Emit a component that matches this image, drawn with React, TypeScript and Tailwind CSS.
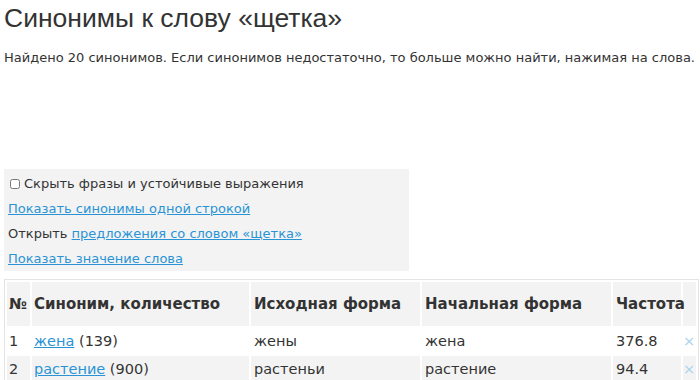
const rows = [
  { n: 1, word: "жена", count: 139, source: "жены", base: "жена", freq: "376.8" },
  { n: 2, word: "растение", count: 900, source: "растеньи", base: "растение", freq: "94.4" },
];

export default function App() {
  return (
    <div className="h-[380px] w-[700px] overflow-hidden bg-white px-1 text-[#333] font-['DejaVu_Sans',Verdana,sans-serif]">
      <h1 className="pt-[3px] text-[26.5px] leading-[30px] font-['Liberation_Sans',Arial,sans-serif] whitespace-nowrap">
        Синонимы к слову «щетка»
      </h1>
      <p className="mt-[15px] text-[13px] leading-[20px] whitespace-nowrap">
        Найдено 20 синонимов. Если синонимов недостаточно, то больше можно найти, нажимая на слова.
      </p>

      <div className="mt-[101px] w-[405px] bg-[#f3f3f3] px-1 pt-[2px] pb-0 text-[13px] leading-[25px]">
        <label className="flex items-center gap-[4px]">
          <input type="checkbox" className="ml-[2px] h-[10px] w-[10px]" />
          Скрыть фразы и устойчивые выражения
        </label>
        <div>
          <a href="#" className="text-[#2a93d5] underline">Показать синонимы одной строкой</a>
        </div>
        <div>
          Открыть <a href="#" className="text-[#2a93d5] underline">предложения со словом «щетка»</a>
        </div>
        <div>
          <a href="#" className="text-[#2a93d5] underline">Показать значение слова</a>
        </div>
      </div>

      <table className="mt-[8px] w-[695px] table-fixed border border-[#e4e4e4] border-separate border-spacing-[2px] text-[14.5px] leading-[20px]">
        <colgroup>
          <col className="w-[23px]" />
          <col className="w-[217px]" />
          <col className="w-[169px]" />
          <col className="w-[189px]" />
          <col className="w-[68px]" />
          <col className="w-[13px]" />
        </colgroup>
        <thead>
          <tr className="bg-[#f3f3f3] font-bold text-[15px]">
            <th className="h-[44px] pl-[2px] text-left">№</th>
            <th className="pl-[2px] text-left whitespace-nowrap">Синоним, количество</th>
            <th className="pl-[3px] text-left whitespace-nowrap">Исходная форма</th>
            <th className="pl-[3px] text-left whitespace-nowrap">Начальная форма</th>
            <th className="pl-[3px] text-left">Частота</th>
            <th></th>
          </tr>
        </thead>
        <tbody>
          {rows.map((r, i) => (
            <tr key={r.n} className={i % 2 === 1 ? "bg-[#f3f3f3]" : ""}>
              <td className="h-[26px] pl-[2px]">{r.n}</td>
              <td className="pl-[2px] whitespace-nowrap">
                <a href="#" className="text-[#2a93d5] underline">{r.word}</a> ({r.count})
              </td>
              <td className="pl-[3px]">{r.source}</td>
              <td className="pl-[3px]">{r.base}</td>
              <td className="pl-[3px]">{r.freq}</td>
              <td className="pr-[2px] text-center text-[#a8d3ef]">×</td>
            </tr>
          ))}
        </tbody>
      </table>
    </div>
  );
}
